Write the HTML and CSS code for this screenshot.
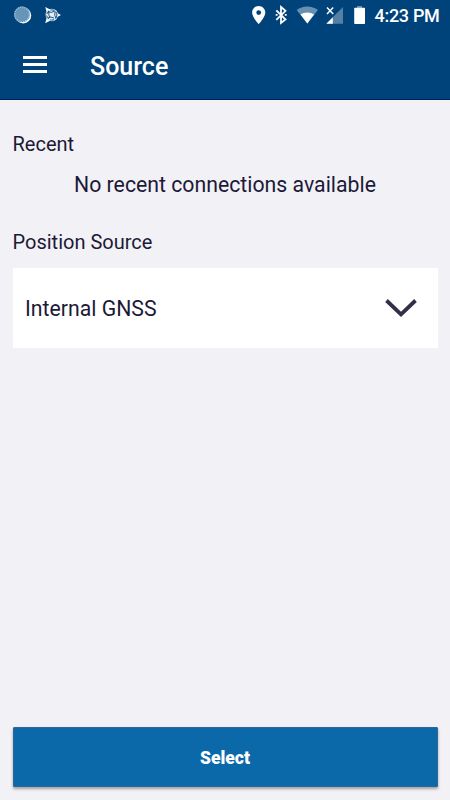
FILE: index.html
```html
<!DOCTYPE html>
<html lang="en">
<head>
<meta charset="utf-8">
<title>Source</title>
<link rel="stylesheet" href="styles.css">
</head>
<body>
<div class="screen">
  <header class="header">
    <div class="status">
      <svg class="status-icons" width="370" height="32" viewBox="0 0 370 32">
        <circle cx="23.2" cy="15.4" r="8" fill="#fff"/>
        <circle cx="22" cy="14.4" r="7.9" fill="#6794b9"/>
        <circle cx="22" cy="14.4" r="7.3" fill="none" stroke="#a9c3d8" stroke-width="1.4" stroke-dasharray="1 1.3"/>
        <path d="M45.2 7 61 15 45.2 23.2 47.5 15Z" fill="#fff"/>
        <circle cx="51.8" cy="15" r="6.2" fill="#e6edf3"/>
        <g fill="none" stroke="#00447c" stroke-width=".9">
          <circle cx="51.8" cy="15" r="5.1" stroke-dasharray="4 1.5"/>
          <path d="M48 12q4 1 7-1M55 12q-1 4 1 6M54 18q-4-2-6 0M49 11q-1 4 1 7"/>
        </g>
        <path fill="#fff" fill-rule="evenodd" d="M258.700 6c-3.700 0-6.600 2.900-6.600 6.600 0 4.800 6.600 11.600 6.600 11.600s6.600-6.800 6.600-11.600c0-3.700-2.900-6.600-6.600-6.600Zm0 4.200a2.400 2.400 0 1 1 0 4.800 2.400 2.400 0 0 1 0-4.800Z"/>
        <path d="M276.300 10.300 285.500 19.500 281 23V7L285.500 10.800 276.300 19.800" fill="none" stroke="#fff" stroke-width="1.800"/>
        <path d="M275.700 14.900h1.900M284.800 14.900h1.900" stroke="#fff" stroke-width="1.800"/>
        <path d="M307.300 23.500 296.700 10q4.600-3.500 10.600-3.500T317.900 10Z" fill="#6690b2"/>
        <path d="M307.300 23.500 300.500 14.600q3-2.200 6.800-2.200t6.800 2.200Z" fill="#fff"/>
        <path d="M343 7v16.700h-16.700Z" fill="#5580a6"/>
        <path d="M332.800 17.200v6.500h-6.500Z" fill="#fff"/>
        <path d="m327 7.500 6.200 6.500M333.200 7.500 327 14" stroke="#fff" stroke-width="1.500"/>
        <path d="M357 6h5v2h-5Z" fill="#6690b2"/>
        <path d="M355 7.800h9.200q.8 0 .8.800v14.600q0 .8-.8.800H355q-.8 0-.8-.8V8.600q0-.8.8-.8Z" fill="#fff"/>
      </svg>
      <span class="clock">4:23 PM</span>
    </div>
    <div class="toolbar">
      <div class="menu"><i></i><i></i><i></i></div>
      <h1>Source</h1>
    </div>
  </header>
  <main class="content">
    <h2>Recent</h2>
    <p class="empty">No recent connections available</p>
    <h2>Position Source</h2>
    <div class="select">
      <span>Internal GNSS</span>
      <svg width="34" height="20" viewBox="0 0 34 20"><path d="M2.500 2.500 17 16.300 31.500 2.500" fill="none" stroke="#322f49" stroke-width="3.800"/></svg>
    </div>
  </main>
  <button class="submit">Select</button>
</div>
</body>
</html>
```
FILE: styles.css
```css
* { box-sizing: border-box; }
body { margin: 0; }
.screen {
  width: 450px;
  height: 800px;
  display: flex;
  flex-direction: column;
  background: #f2f1f6;
  color: #1c1936;
  font-family: Roboto, sans-serif;
}
.header {
  height: 100px;
  background: #00437b;
  border-bottom: 1px solid #002060;
  color: #fff;
}
.status { height: 32px; display: flex; }
.status-icons { flex: none; }
.clock {
  padding-left: 4.500px;
  font-size: 18px;
  letter-spacing: -0.300px;
  line-height: 32px;
  font-weight: 500;
  white-space: nowrap;
}
.toolbar {
  height: 67px;
  display: flex;
  align-items: center;
  padding-left: 23px;
}
.menu {
  width: 24px;
  height: 17px;
  margin-top: -3px;
  display: flex;
  flex-direction: column;
  justify-content: space-between;
}
.menu i { height: 3px; background: #fff; }
h1 {
  margin: 3px 0 0 43px;
  font-size: 25px;
  line-height: 30px;
  font-weight: 500;
}
.content { flex: 1; padding: 32px 12.500px 0; }
h2 {
  margin: 0;
  font-size: 20px;
  line-height: 24px;
  font-weight: 400;
}
.empty {
  margin: 16px 0 33px;
  font-size: 21.250px;
  line-height: 25px;
  text-align: center;
}
.select {
  height: 80px;
  margin-top: 14px;
  padding: 0 19.500px 0 12.500px;
  display: flex;
  align-items: center;
  justify-content: space-between;
  background: #fff;
  font-size: 21.250px;
}
.submit {
  height: 60px;
  margin: 0 12.500px 13px;
  padding: 2px 0 0;
  border: 1px solid #2c6798;
  border-radius: 1px;
  background: #0c69a9;
  box-shadow: 0 2px 3px rgba(0, 0, 0, .35);
  color: #fff;
  font: 900 17.500px Roboto, sans-serif;
}
```
